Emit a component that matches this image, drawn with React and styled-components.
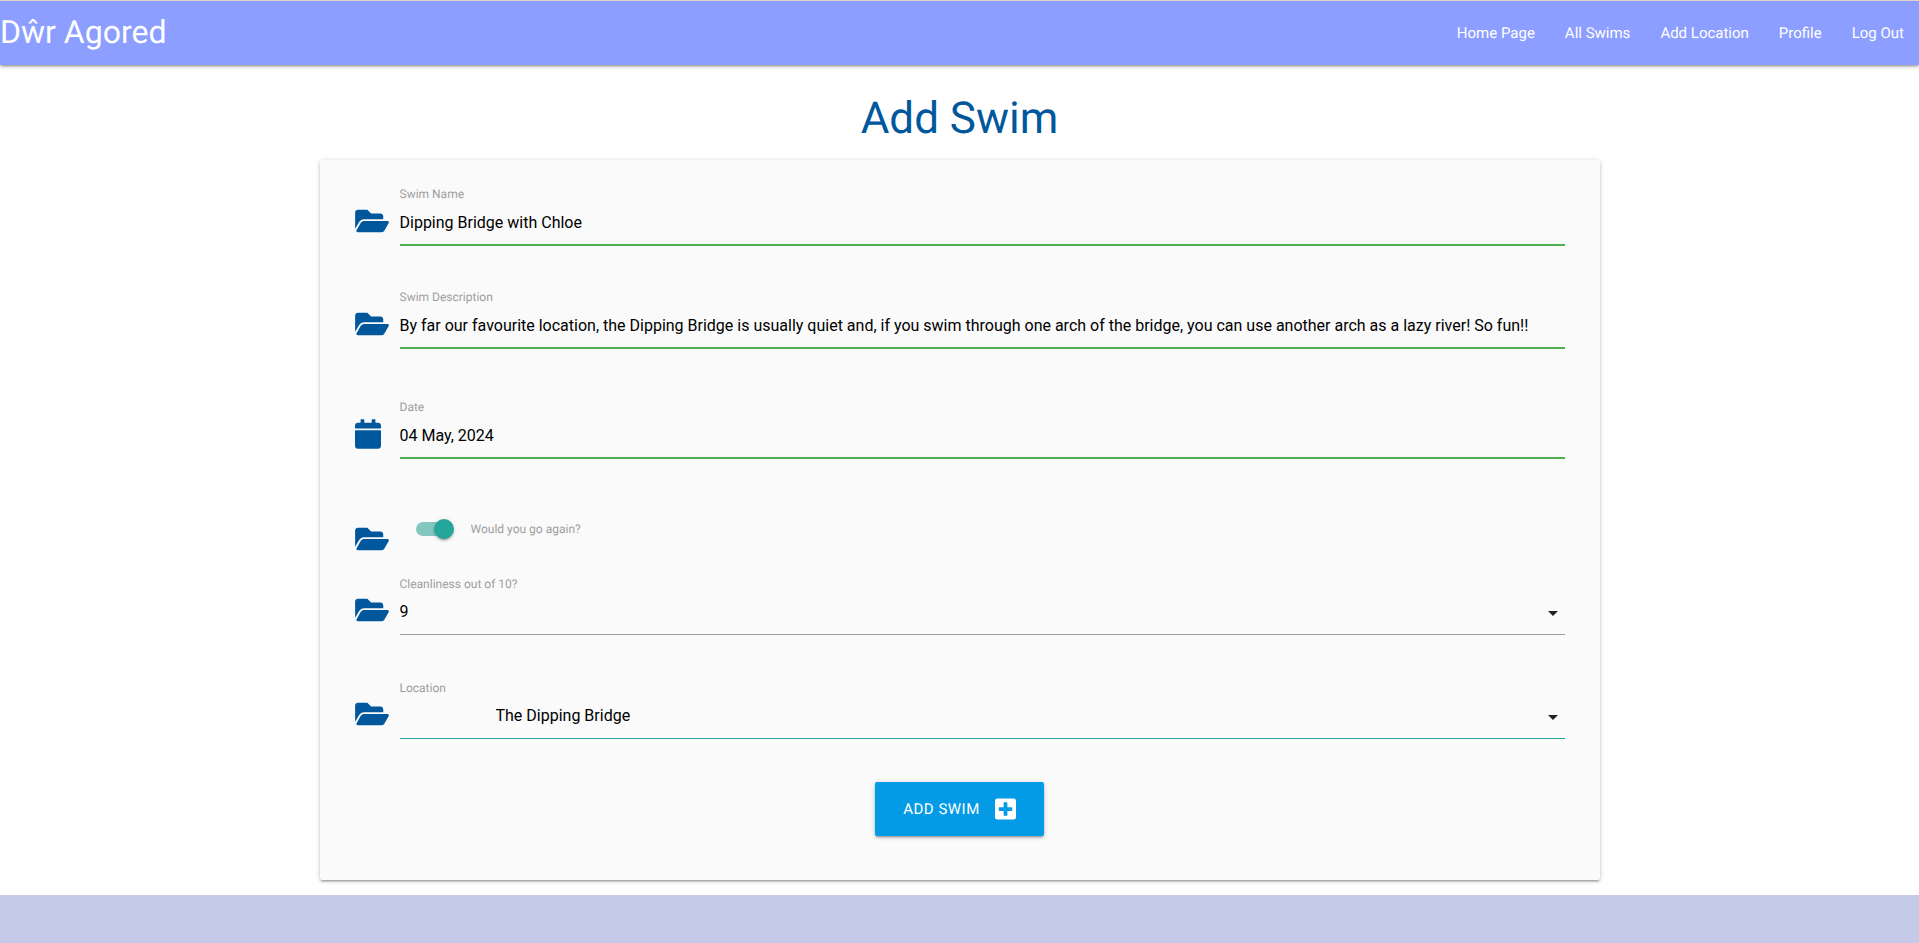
import React from "react";
import styled, { createGlobalStyle } from "styled-components";
import { FaFolderOpen, FaCalendar, FaPlusSquare } from "react-icons/fa";

const GlobalStyle = createGlobalStyle`
  *, *::before, *::after { box-sizing: border-box; }
  body {
    margin: 0;
    background: #fff;
    color: rgba(0, 0, 0, 0.87);
    font-family: Roboto, "Liberation Sans", sans-serif;
    font-size: 15px;
    line-height: 24px;
    text-rendering: geometricPrecision;
  }
`;

const raised = `0 2px 2px 0 rgba(0, 0, 0, 0.14), 0 3px 1px -2px rgba(0, 0, 0, 0.12),
  0 1px 5px 0 rgba(0, 0, 0, 0.2)`;

const Page = styled.div`
  display: flex;
  flex-direction: column;
  min-height: 100vh;
  border-top: 1px solid #ecdcd8;
`;

const NavBar = styled.nav`
  display: flex;
  justify-content: space-between;
  align-items: center;
  height: 64px;
  background: #8c9eff;
  box-shadow: ${raised};
`;

const Brand = styled.a`
  padding-bottom: 2px;
  color: #fff;
  font-size: 32px;
  line-height: 60px;
  text-decoration: none;
`;

const NavList = styled.ul`
  display: flex;
  margin: 0;
  padding: 0;
  list-style: none;
`;

const NavLink = styled.a`
  display: block;
  padding: 0 15px;
  color: #fff;
  line-height: 64px;
  text-decoration: none;
`;

const Main = styled.main`
  flex: 1;
  width: 100%;
  max-width: 1280px;
  margin: 0 auto;
`;

const Title = styled.h1`
  margin: 29px 0 18px;
  color: #01579b;
  font-size: 44px;
  font-weight: 400;
  line-height: 48px;
  text-align: center;
`;

const Card = styled.form`
  padding: 28px 35px 44px;
  border-radius: 2px;
  background: #fafafa;
  box-shadow: ${raised};
`;

const Row = styled.div`
  display: grid;
  grid-template-columns: 45px 1fr;
  align-items: ${(p) => (p.$centered ? "center" : "end")};
  margin-bottom: ${(p) => p.$gap}px;
  color: #01579b;
`;

const RowIcon = styled.span`
  display: flex;
  align-items: center;
  height: ${(p) => (p.$short ? 30 : 48)}px;
  padding-bottom: ${(p) => (p.$short ? 0 : 3)}px;

  svg {
    width: ${(p) => (p.$narrow ? 26 : 34)}px;
    height: 30px;
  }
`;

const Field = styled.div`
  display: flex;
  flex-direction: column;
`;

const Label = styled.label`
  color: #9e9e9e;
  font-size: 12px;
  line-height: 12px;
`;

const TextInput = styled.input`
  width: 100%;
  height: 46px;
  padding: 0;
  border: 0;
  border-bottom: 2px solid #4caf50;
  outline: none;
  background: transparent;
  color: #000;
  font: inherit;
  font-size: 16px;
`;

const SelectBox = styled.div`
  display: grid;
  align-items: center;

  > * { grid-area: 1 / 1; }
`;

const Select = styled.select`
  appearance: none;
  width: 100%;
  height: 45px;
  padding: 0 24px 0 ${(p) => p.$indent || 0}px;
  border: 0;
  border-bottom: 1px solid ${(p) => (p.$active ? "#26a69a" : "#9e9e9e")};
  border-radius: 0;
  outline: none;
  background: transparent;
  color: #000;
  font: inherit;
  font-size: 16px;
`;

const Caret = styled.svg`
  justify-self: end;
  width: 24px;
  height: 24px;
  fill: rgba(0, 0, 0, 0.87);
  pointer-events: none;
`;

const SwitchLine = styled.div`
  display: flex;
  align-items: center;
  height: 30px;
  padding: 0 0 20px 16px;
`;

const Switch = styled.input`
  appearance: none;
  display: flex;
  align-items: center;
  flex: none;
  width: 36px;
  height: 14px;
  margin: 0 19px 0 0;
  border-radius: 15px;
  background: #b0b0b0;
  cursor: pointer;

  &::after {
    content: "";
    flex: none;
    width: 20px;
    height: 20px;
    border-radius: 50%;
    background: #f1f1f1;
    box-shadow: 0 3px 1px -2px rgba(0, 0, 0, 0.2), 0 2px 2px 0 rgba(0, 0, 0, 0.14),
      0 1px 5px 0 rgba(0, 0, 0, 0.12);
  }

  &:checked { background: #84c7c1; }
  &:checked::after { margin-left: 18px; background: #26a69a; }
`;

const Actions = styled.div`
  display: flex;
  justify-content: center;
`;

const SubmitButton = styled.button`
  display: flex;
  align-items: center;
  gap: 15px;
  height: 54px;
  padding: 0 28px;
  border: 0;
  border-radius: 2px;
  background: #039be5;
  box-shadow: ${raised};
  color: #fff;
  font: inherit;
  letter-spacing: 0.5px;
  text-transform: uppercase;
  text-rendering: inherit;
  cursor: pointer;

  svg { width: 21px; height: 24px; }
`;

const Footer = styled.footer`
  height: 48px;
  margin-top: 15px;
  background: #c5cae9;
`;

const links = ["Home Page", "All Swims", "Add Location", "Profile", "Log Out"];

function TextRow({ id, label, value, gap, icon: Icon = FaFolderOpen }) {
  return (
    <Row $gap={gap}>
      <RowIcon $narrow={Icon === FaCalendar}><Icon /></RowIcon>
      <Field>
        <Label htmlFor={id}>{label}</Label>
        <TextInput id={id} type="text" defaultValue={value} />
      </Field>
    </Row>
  );
}

function SelectRow({ id, label, value, gap, indent, active }) {
  return (
    <Row $gap={gap}>
      <RowIcon><FaFolderOpen /></RowIcon>
      <Field>
        <Label htmlFor={id}>{label}</Label>
        <SelectBox>
          <Select id={id} defaultValue={value} $indent={indent} $active={active}>
            <option>{value}</option>
          </Select>
          <Caret viewBox="0 0 24 24" aria-hidden="true">
            <path d="M7 10l5 5 5-5z" />
          </Caret>
        </SelectBox>
      </Field>
    </Row>
  );
}

export default function App() {
  return (
    <Page>
      <GlobalStyle />
      <NavBar>
        <Brand href="#">Dŵr Agored</Brand>
        <NavList>
          {links.map((text) => (
            <li key={text}><NavLink href="#">{text}</NavLink></li>
          ))}
        </NavList>
      </NavBar>
      <Main>
        <Title>Add Swim</Title>
        <Card onSubmit={(e) => e.preventDefault()}>
          <TextRow id="name" label="Swim Name" value="Dipping Bridge with Chloe" gap={45} />
          <TextRow
            id="description"
            label="Swim Description"
            value="By far our favourite location, the Dipping Bridge is usually quiet and, if you swim through one arch of the bridge, you can use another arch as a lazy river! So fun!!"
            gap={52}
          />
          <TextRow id="date" label="Date" value="04 May, 2024" gap={65} icon={FaCalendar} />
          <Row $centered $gap={24}>
            <RowIcon $short><FaFolderOpen /></RowIcon>
            <SwitchLine>
              <Switch id="again" type="checkbox" defaultChecked />
              <Label htmlFor="again">Would you go again?</Label>
            </SwitchLine>
          </Row>
          <SelectRow id="cleanliness" label="Cleanliness out of 10?" value="9" gap={47} />
          <SelectRow id="location" label="Location" value="The Dipping Bridge" gap={43} indent={96} active />
          <Actions>
            <SubmitButton type="submit">Add Swim<FaPlusSquare /></SubmitButton>
          </Actions>
        </Card>
      </Main>
      <Footer />
    </Page>
  );
}
